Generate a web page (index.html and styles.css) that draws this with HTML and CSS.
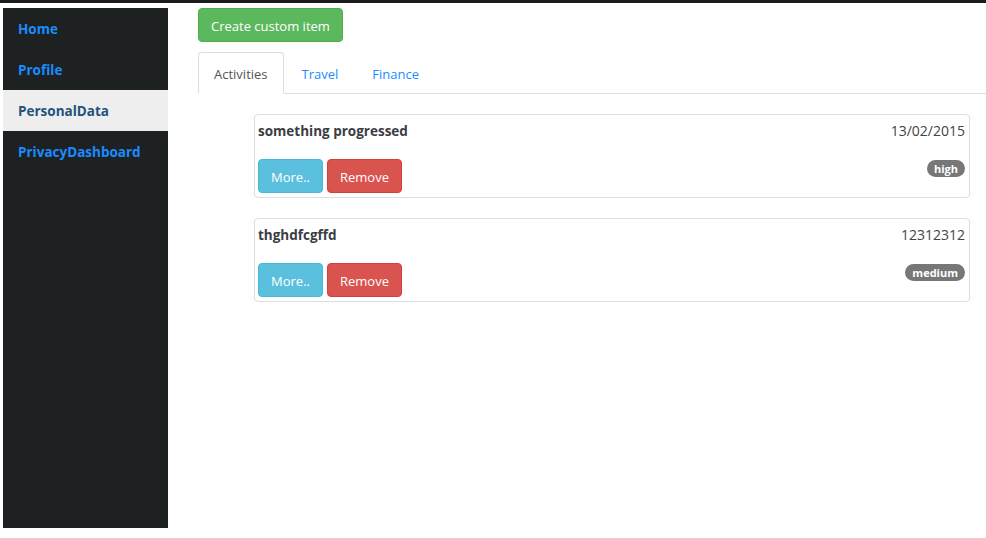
FILE: index.html
```html
<!DOCTYPE html>
<html>
<head>
<meta charset="utf-8">
<link rel="stylesheet" href="styles.css">
</head>
<body>
<div class="topbar"></div>
<div class="layout">
  <nav class="sidebar">
    <a class="nav-item" href="#">Home</a>
    <a class="nav-item" href="#">Profile</a>
    <a class="nav-item active" href="#">PersonalData</a>
    <a class="nav-item" href="#">PrivacyDashboard</a>
  </nav>
  <main class="main">
    <button class="btn btn-success">Create custom item</button>
    <ul class="tabs">
      <li class="tab active"><a href="#">Activities</a></li>
      <li class="tab"><a href="#">Travel</a></li>
      <li class="tab"><a href="#">Finance</a></li>
    </ul>
    <div class="cards">
      <div class="card">
        <div class="card-head">
          <span class="card-title">something progressed</span>
          <span class="card-date">13/02/2015</span>
        </div>
        <div class="card-foot">
          <div class="actions">
            <button class="btn btn-info">More..</button>
            <button class="btn btn-danger">Remove</button>
          </div>
          <span class="badge">high</span>
        </div>
      </div>
      <div class="card">
        <div class="card-head">
          <span class="card-title">thghdfcgffd</span>
          <span class="card-date">12312312</span>
        </div>
        <div class="card-foot">
          <div class="actions">
            <button class="btn btn-info">More..</button>
            <button class="btn btn-danger">Remove</button>
          </div>
          <span class="badge">medium</span>
        </div>
      </div>
    </div>
  </main>
</div>
</body>
</html>
```
FILE: styles.css
```css
* { box-sizing: border-box; }
html, body { margin: 0; padding: 0; background: #fff; }
body {
  font-family: "Open Sans", "Noto Sans", "Liberation Sans", sans-serif;
  font-size: 13px;
  color: #333;
}
.topbar { height: 3px; background: #1b1b1b; }
.layout {
  display: flex;
  padding: 5px 0 0 3px;
  align-items: flex-start;
}
.sidebar {
  width: 165px;
  height: 520px;
  background: #1e2122;
  display: flex;
  flex-direction: column;
  flex-shrink: 0;
}
.nav-item {
  display: block;
  height: 41px;
  line-height: 41px;
  padding: 1px 0 0 15px;
  font-weight: 700;
  font-size: 13.5px;
  color: #1a8cff;
  text-decoration: none;
}
.nav-item.active { background: #eeeeee; color: #23527c; }
.main { flex: 1; margin-left: 30px; }
.btn {
  font-family: inherit;
  font-size: 13px;
  height: 34px;
  padding: 1px 12px 0;
  border: 1px solid transparent;
  border-radius: 4px;
  color: #fff;
  cursor: pointer;
}
.btn-success { background: #5cb85c; border-color: #4cae4c; }
.btn-info { background: #5bc0de; border-color: #46b8da; }
.btn-danger { background: #d9534f; border-color: #d43f3a; }
.tabs {
  list-style: none;
  margin: 10px 0 0;
  padding: 0;
  display: flex;
  border-bottom: 1px solid #ddd;
}
.tab { margin-right: 2px; margin-bottom: -1px; }
.tab a {
  display: block;
  height: 42px;
  line-height: 40px;
  padding: 1px 15px 0;
  border: 1px solid transparent;
  border-radius: 4px 4px 0 0;
  color: #1a8cff;
  text-decoration: none;
}
.tab.active a {
  color: #555;
  background: #fff;
  border-color: #ddd #ddd transparent;
}
.cards {
  margin: 20px 16px 0 56px;
  display: flex;
  flex-direction: column;
  gap: 20px;
}
.card {
  border: 1px solid #ddd;
  border-radius: 4px;
  padding: 6px 4px 4px 3px;
}
.card-head {
  display: flex;
  justify-content: space-between;
  align-items: center;
  height: 20px;
  line-height: 20px;
}
.card-title { font-weight: 700; font-size: 13.5px; color: #3a3d44; }
.card-date { font-size: 14px; color: #444; }
.card-foot {
  margin-top: 18px;
  display: flex;
  justify-content: space-between;
  align-items: flex-start;
}
.actions { display: flex; gap: 4px; }
.badge {
  margin-top: 1px;
  background: #777;
  color: #fff;
  font-size: 11px;
  font-weight: 700;
  line-height: 1;
  padding: 3px 7px;
  border-radius: 10px;
}
```
